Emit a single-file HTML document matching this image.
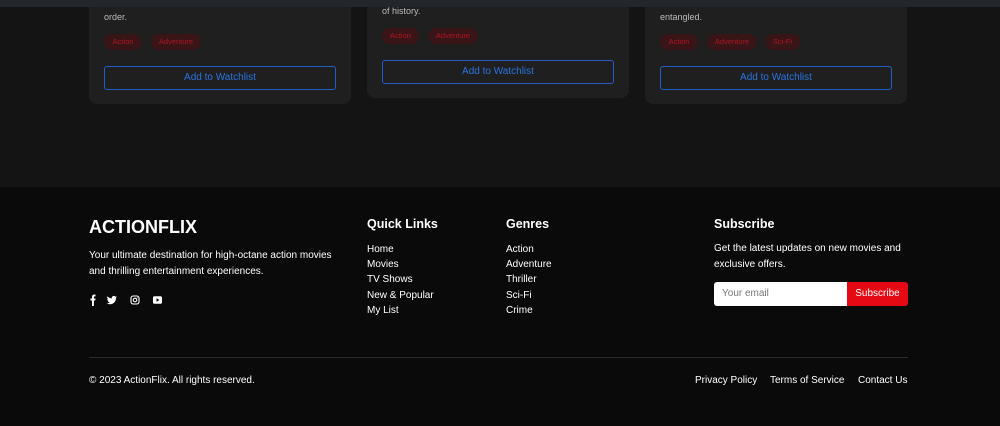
<!DOCTYPE html>
<html><head><meta charset="utf-8"><style>
*{box-sizing:border-box;margin:0;padding:0}
body{width:1000px;height:426px;overflow:hidden;background:#141414;font-family:"Liberation Sans",sans-serif;position:relative;color:#fff}
.hdr{position:absolute;left:0;top:0;width:1000px;height:7px;background:#23262b;z-index:5}
.card{position:absolute;background:#1f1f1f;border-radius:0 0 8px 8px;width:262px;top:-20px}
.card p{position:absolute;left:15px;font-size:9px;color:#bbb}
.tag{position:absolute;height:16px;border-radius:8px;background:#3a1518;color:#b01520;font-size:7.5px;line-height:16px;text-align:center}
.btn{position:absolute;left:15px;width:232px;height:24px;border:1px solid #1e5fc4;border-radius:3px;color:#2a73e0;font-size:10px;line-height:22px;text-align:center}
.foot{position:absolute;left:0;top:187px;width:1000px;height:239px;background:#0a0a0a}
.abs{position:absolute}
h3{position:absolute;font-size:12.5px;font-weight:bold}
ul{position:absolute;list-style:none;font-size:10px;line-height:15.2px}
</style></head><body>
<div class="hdr"></div>
<div class="card" style="left:89px;height:124px">
<p style="top:32px">order.</p>
<div class="tag" style="left:15px;top:54px;width:38px">Action</div>
<div class="tag" style="left:62px;top:54px;width:50px">Adventure</div>
<div class="btn" style="top:86px">Add to Watchlist</div>
</div>
<div class="card" style="left:367px;height:118px">
<p style="top:26px">of history.</p>
<div class="tag" style="left:15px;top:48px;width:37px">Action</div>
<div class="tag" style="left:61px;top:48px;width:50px">Adventure</div>
<div class="btn" style="top:80px">Add to Watchlist</div>
</div>
<div class="card" style="left:645px;height:124px">
<p style="top:32px">entangled.</p>
<div class="tag" style="left:15px;top:54px;width:38px">Action</div>
<div class="tag" style="left:62px;top:54px;width:50px">Adventure</div>
<div class="tag" style="left:120px;top:54px;width:35px">Sci-Fi</div>
<div class="btn" style="top:86px">Add to Watchlist</div>
</div>
<div class="foot">
<div class="abs" style="left:89px;top:30px;font-size:18px;font-weight:bold">ACTIONFLIX</div>
<div class="abs" style="left:89px;top:61px;font-size:10px;line-height:15.5px;width:260px">Your ultimate destination for high-octane action movies and thrilling entertainment experiences.</div>
<svg class="abs" style="left:89px;top:107px" width="80" height="12" viewBox="0 0 80 12" fill="#fff">
<path d="M3 12V6.5H1.5V4.5H3V3C3 1.3 4 .5 5.4.5L6.5.6V2.4H5.7C5 2.4 4.9 2.8 4.9 3.3V4.5H6.5L6.2 6.5H4.9V12Z"/>
<path d="M28 3c-.4.2-.8.3-1.2.3.4-.3.8-.7.9-1.2-.4.3-.9.4-1.3.5a2.1 2.1 0 0 0-3.6 1.9C21 4.4 19.5 3.6 18.5 2.3c-.6 1-.3 2.2.6 2.8-.3 0-.7-.1-1-.3 0 1 .7 1.9 1.7 2.1-.3.1-.7.1-1 0 .3.9 1.1 1.5 2 1.5-.9.7-2.1 1.1-3.2.9 1 .6 2.1 1 3.3 1 4 0 6.200-3.400 6.100-6.400.4-.3.8-.6 1-1z"/>
<rect x="42" y="2" width="8" height="8" rx="2.2" fill="none" stroke="#fff" stroke-width="1.1"/><circle cx="46" cy="6" r="1.8" fill="none" stroke="#fff" stroke-width="1.1"/><circle cx="48.3" cy="3.7" r=".5"/>
<path d="M64 3.5c.1-.8.7-1.3 1.500-1.300h6c.8 0 1.400.500 1.500 1.300.1 1.600.1 3.400 0 5-.1.8-.7 1.300-1.500 1.300h-6c-.8 0-1.400-.5-1.500-1.300-.1-1.600-.1-3.400 0-5z"/><path d="M67.5 4.2v3.6L70.5 6z" fill="#0a0a0a"/>
</svg>
<h3 style="left:367px;top:30px">Quick Links</h3>
<ul style="left:367px;top:55px"><li>Home</li><li>Movies</li><li>TV Shows</li><li>New &amp; Popular</li><li>My List</li></ul>
<h3 style="left:506px;top:30px">Genres</h3>
<ul style="left:506px;top:55px"><li>Action</li><li>Adventure</li><li>Thriller</li><li>Sci-Fi</li><li>Crime</li></ul>
<h3 style="left:714px;top:30px">Subscribe</h3>
<div class="abs" style="left:714px;top:54px;font-size:10px;line-height:15.5px;width:200px">Get the latest updates on new movies and exclusive offers.</div>
<div class="abs" style="left:714px;top:95px;width:133px;height:24px;background:#fff;border-radius:3px 0 0 3px;color:#777;font-size:10px;line-height:24px;padding-left:8px">Your email</div>
<div class="abs" style="left:847px;top:95px;width:61px;height:24px;background:#e50914;border-radius:0 3px 3px 0;font-size:10px;line-height:24px;text-align:center">Subscribe</div>
<div class="abs" style="left:89px;top:170px;width:819px;height:1px;background:#2a2a2a"></div>
<div class="abs" style="left:89px;top:188px;font-size:10px">© 2023 ActionFlix. All rights reserved.</div>
<div class="abs" style="left:695px;top:188px;font-size:10px">Privacy Policy</div>
<div class="abs" style="left:770px;top:188px;font-size:10px">Terms of Service</div>
<div class="abs" style="left:858px;top:188px;font-size:10px">Contact Us</div>
</div>
</body></html>
